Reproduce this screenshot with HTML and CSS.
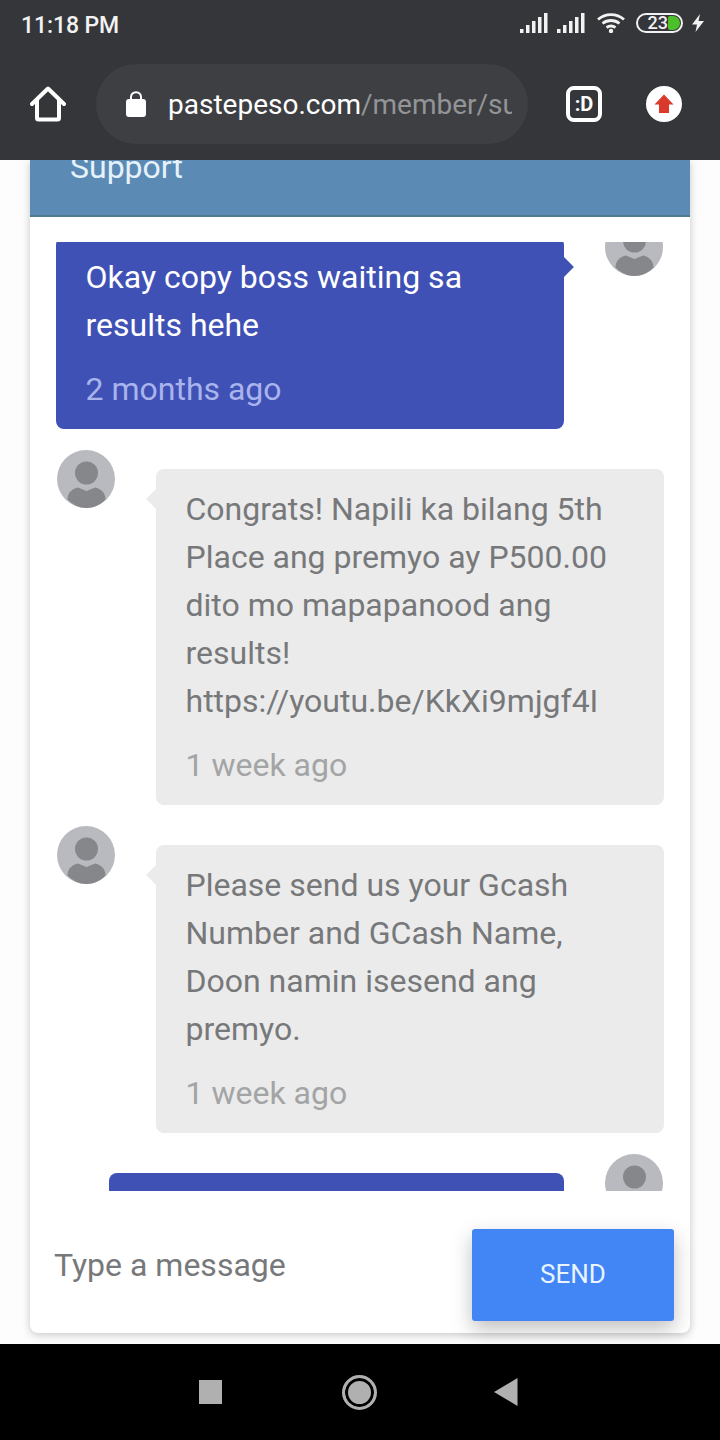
FILE: index.html
```html
<!DOCTYPE html>
<html lang="en">
<head>
    <meta charset="UTF-8">
    <meta name="viewport" content="width=device-width, initial-scale=1.0">
    <title>Support</title>
    <link rel="stylesheet" href="styles.css">
</head>
<body>
    <svg class="defs" width="0" height="0">
        <symbol id="avatar" viewBox="0 0 58 58">
            <circle cx="29" cy="29" r="29" fill="#b9babf"/>
            <circle cx="29.5" cy="23" r="11.5" fill="#86878b"/>
            <path d="M21 37.500 L29.500 41 L38 37.500 C44 38.500 48.500 43 48.500 49.500 C43.500 54.500 36.500 58 29.500 58 C22.500 58 15.500 54.500 10.500 49.500 C10.500 43 15 38.500 21 37.500 Z" fill="#86878b"/>
        </symbol>
        <symbol id="signal" viewBox="0 0 28 20">
            <rect x="0" y="16" width="3.500" height="4"/>
            <rect x="6" y="12" width="3.500" height="8"/>
            <rect x="12" y="8" width="3.500" height="12"/>
            <rect x="18" y="4" width="3.500" height="16"/>
            <rect x="24" y="0" width="3.500" height="20"/>
        </symbol>
    </svg>

    <header class="browser-top">
        <div class="status-bar">
            <span class="clock">11:18 PM</span>
            <div class="status-icons">
                <svg class="signal" width="28" height="20" fill="#f2f2f2"><use href="#signal"/></svg>
                <svg class="signal" width="28" height="20" fill="#f2f2f2"><use href="#signal"/></svg>
                <svg class="wifi" width="28" height="20" viewBox="0 0 28 20" fill="none" stroke="#f2f2f2" stroke-width="2.800">
                    <path d="M1 6.500 C8.500 0 19.500 0 27 6.500"/>
                    <path d="M5.500 10.500 C10.500 6.500 17.500 6.500 22.500 10.500"/>
                    <path d="M9.500 14.500 C12.500 12.500 15.500 12.500 18.500 14.500"/>
                    <circle cx="14" cy="18" r="2.200" fill="#f2f2f2" stroke="none"/>
                </svg>
                <div class="battery">
                    <span class="battery-level">23</span>
                    <span class="battery-fill"></span>
                </div>
                <svg class="bolt" width="12" height="18" viewBox="0 0 12 18" fill="#f2f2f2">
                    <path d="M8 0 L0 10.500 L5 10.500 L3.500 18 L12 7 L6.500 7 Z"/>
                </svg>
            </div>
        </div>
        <div class="toolbar">
            <svg class="home-icon" width="36" height="36" viewBox="0 0 36 36" fill="none" stroke="#fff" stroke-width="4" stroke-linejoin="round" stroke-linecap="round">
                <path d="M2 18 L18 2.500 L34 18"/>
                <path d="M7 14 L7 32 C7 33 7.500 33.500 8.500 33.500 L27.500 33.500 C28.500 33.500 29 33 29 32 L29 14"/>
            </svg>
            <div class="omnibox">
                <svg class="lock-icon" width="20" height="26" viewBox="0 0 20 26">
                    <path d="M5 10 L5 6 C5 3.200 7.200 1.200 10 1.200 C12.800 1.200 15 3.200 15 6 L15 10" fill="none" stroke="#fff" stroke-width="2"/>
                    <rect x="0" y="8" width="20" height="18" rx="3" fill="#fff"/>
                </svg>
                <div class="url"><span class="url-host">pastepeso.com</span>/member/su</div>
            </div>
            <div class="tab-count">:D</div>
            <svg class="update-icon" width="36" height="36" viewBox="0 0 36 36">
                <circle cx="18" cy="18" r="18" fill="#fff"/>
                <path d="M18 8.500 L27.500 18.500 L23 18.500 L23 27 L13 27 L13 18.500 L8.500 18.500 Z" fill="#d93a2b"/>
            </svg>
        </div>
    </header>

    <main class="page">
        <section class="chat-card">
            <div class="chat-header">Support</div>

            <div class="chat-scroll">
                <div class="chat-list">
                    <div class="chat-row sent">
                        <div class="bubble">
                            <div>Okay copy boss waiting sa results hehe</div>
                            <div class="bubble-time">2 months ago</div>
                        </div>
                        <svg class="avatar"><use href="#avatar"/></svg>
                    </div>

                    <div class="chat-row received">
                        <svg class="avatar"><use href="#avatar"/></svg>
                        <div class="bubble">
                            <div>Congrats! Napili ka bilang 5th Place ang premyo ay P500.00 dito mo mapapanood ang results! https://youtu.be/KkXi9mjgf4I</div>
                            <div class="bubble-time">1 week ago</div>
                        </div>
                    </div>

                    <div class="chat-row received">
                        <svg class="avatar"><use href="#avatar"/></svg>
                        <div class="bubble">
                            <div>Please send us your Gcash Number and GCash Name, Doon namin isesend ang premyo.</div>
                            <div class="bubble-time">1 week ago</div>
                        </div>
                    </div>

                    <div class="chat-row sent">
                        <div class="bubble last-bubble">
                            <div>&nbsp;</div>
                        </div>
                        <svg class="avatar"><use href="#avatar"/></svg>
                    </div>
                </div>
            </div>

            <div class="chat-input">
                <input class="message-input" type="text" placeholder="Type a message">
                <button class="send-button">SEND</button>
            </div>
        </section>
    </main>

    <footer class="nav-bar">
        <span class="nav-square"></span>
        <span class="nav-circle"></span>
        <svg width="24" height="28" viewBox="0 0 24 28" fill="#b0b0b0"><path d="M23.500 0 L23.500 28 L0 14 Z"/></svg>
    </footer>
</body>
</html>
```

FILE: styles.css
```css
* {
    box-sizing: border-box;
}

html, body {
    height: 1440px;
}

body {
    margin: 0;
    display: flex;
    flex-direction: column;
    overflow: hidden;
    background-color: #fdfdfd;
    font-family: Roboto, "Noto Sans", sans-serif;
}

.defs {
    position: absolute;
}

/* Browser chrome */
.browser-top {
    height: 160px;
    flex-shrink: 0;
    background-color: #35363a;
    color: #fff;
    position: relative;
    z-index: 1;
}

.status-bar {
    height: 48px;
    padding: 2px 16px 0 21px;
    display: flex;
    align-items: center;
    justify-content: space-between;
}

.clock {
    font-size: 23px;
    font-weight: 500;
    letter-spacing: -0.1px;
    color: #f2f2f2;
}

.status-icons {
    display: flex;
    align-items: center;
    margin-top: -4px;
}

.signal {
    margin-right: 9px;
}

.wifi {
    margin-left: 3px;
    margin-right: 11px;
}

.battery {
    width: 47px;
    height: 20px;
    border: 2px solid #f2f2f2;
    border-radius: 10px;
    display: flex;
    align-items: center;
    justify-content: flex-end;
    padding-right: 1px;
    margin-right: 9px;
}

.battery-level {
    font-size: 18px;
    font-weight: 500;
    line-height: 16px;
    color: #f2f2f2;
}

.battery-fill {
    width: 12px;
    height: 14px;
    border-radius: 2px 7px 7px 2px;
    background-color: #4cc02a;
}

.toolbar {
    height: 112px;
    padding: 16px 38px 16px 30px;
    display: flex;
    align-items: center;
}

.omnibox {
    width: 432px;
    height: 80px;
    margin-left: 30px;
    padding: 0 16px 0 30px;
    border-radius: 40px;
    background-color: #3e3f42;
    display: flex;
    align-items: center;
}

.lock-icon {
    flex-shrink: 0;
}

.url {
    margin-left: 22px;
    font-size: 28px;
    color: #939497;
    white-space: nowrap;
    overflow: hidden;
}

.url-host {
    color: #fff;
}

.tab-count {
    width: 36px;
    height: 36px;
    margin-left: 38px;
    border: 4px solid #fff;
    border-radius: 8px;
    font-size: 20px;
    font-weight: 700;
    line-height: 28px;
    text-align: center;
}

.update-icon {
    margin-left: 44px;
}

/* Page */
.page {
    flex: 1;
    min-height: 0;
    padding: 0 30px 11px;
}

.chat-card {
    height: 100%;
    display: flex;
    flex-direction: column;
    background-color: #fff;
    border-radius: 0 0 8px 8px;
    box-shadow: 0 2px 8px rgba(0, 0, 0, 0.22);
}

.chat-header {
    height: 57px;
    flex-shrink: 0;
    padding: 0 40px;
    display: flex;
    align-items: flex-end;
    padding-bottom: 30px;
    overflow: hidden;
    font-size: 32px;
    line-height: 36px;
    color: #e6f2fa;
    background-color: #5b8ab5;
    border-bottom: 2px solid #4d7a8f;
}

.chat-scroll {
    height: 949px;
    margin-top: 25px;
    flex-shrink: 0;
    overflow: hidden;
}

.chat-list {
    margin-top: -24px;
    padding: 0 26px;
}

.chat-row {
    display: flex;
    align-items: flex-start;
    margin-bottom: 21px;
}

.chat-row.sent {
    justify-content: flex-end;
}

.avatar {
    width: 58px;
    height: 58px;
    flex-shrink: 0;
}

.sent .avatar {
    margin-right: 1px;
    margin-left: 41px;
}

.received .avatar {
    margin-left: 1px;
    margin-right: 41px;
}

.bubble {
    position: relative;
    width: 508px;
    margin-top: 19px;
    padding: 16px 29px 16px 29.500px;
    border-radius: 8px;
    font-size: 32px;
    line-height: 48px;
}

.bubble-time {
    margin-top: 16px;
}

.bubble::after {
    content: "";
    position: absolute;
    top: 23px;
    width: 14px;
    height: 14px;
    transform: rotate(45deg);
    background-color: inherit;
}

.sent .bubble {
    background-color: #3f51b5;
    color: #fff;
}

.sent .bubble::after {
    right: -7px;
}

.sent .bubble-time {
    color: #a9b4ec;
}

.received .bubble {
    background-color: #ebebeb;
    color: #77787a;
}

.received .bubble::after {
    left: -7px;
}

.received .bubble-time {
    color: #a3a4a6;
}

.last-bubble {
    width: 455px;
}

.chat-input {
    flex: 1;
    display: flex;
    align-items: flex-start;
    padding: 38px 16px 0 24px;
}

.message-input {
    flex: 1;
    min-width: 0;
    height: 72px;
    padding: 0;
    border: none;
    outline: none;
    background: transparent;
    font-family: inherit;
    font-size: 32px;
}

.message-input::placeholder {
    color: #77787a;
    opacity: 1;
}

.send-button {
    width: 202px;
    height: 92px;
    flex-shrink: 0;
    padding-bottom: 4px;
    border: none;
    border-radius: 3px;
    background-color: #4285f4;
    color: #e8f4ff;
    font-family: inherit;
    font-size: 26px;
    box-shadow: 0 8px 20px rgba(0, 0, 0, 0.25);
}

/* Android nav */
.nav-bar {
    height: 96px;
    flex-shrink: 0;
    background-color: #000;
    display: flex;
    align-items: center;
    position: relative;
    padding-left: 199px;
}

.nav-square {
    width: 23px;
    height: 24px;
    background-color: #b0b0b0;
}

.nav-circle {
    width: 35px;
    height: 35px;
    margin-left: 120px;
    border: 3px solid #b0b0b0;
    border-radius: 50%;
    background-color: #b0b0b0;
    box-shadow: inset 0 0 0 3px #000;
}

.nav-bar svg {
    margin-left: 117px;
}
```
